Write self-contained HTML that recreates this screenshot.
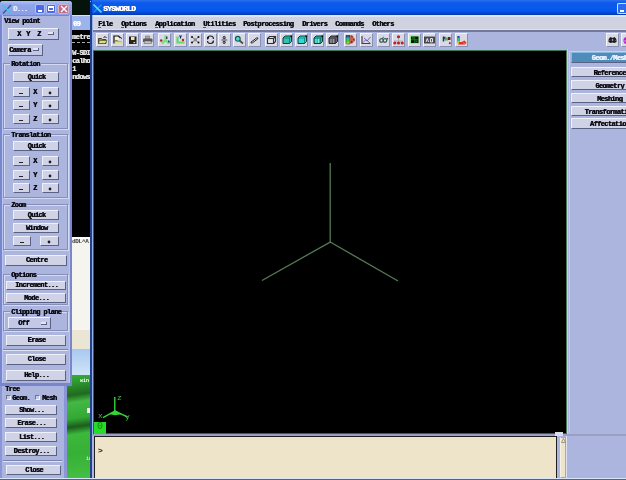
<!DOCTYPE html>
<html><head><meta charset="utf-8">
<style>
*{margin:0;padding:0;box-sizing:border-box}
html,body{width:626px;height:480px;overflow:hidden;background:#06120e;position:relative;font-family:"Liberation Mono",monospace;font-weight:bold}
.a{position:absolute}
svg{display:block}
.t{position:absolute;font-size:7px;line-height:8px;letter-spacing:-0.62px;color:#0a0a12;text-shadow:0.5px 0 0 currentColor;white-space:nowrap}
.btn{position:absolute;background:#d0d2e6;border-top:1px solid #eef0fa;border-left:1px solid #eef0fa;border-right:1px solid #5a6284;border-bottom:1px solid #5a6284;font-size:7px;line-height:8px;letter-spacing:-0.62px;color:#0a0a12;text-shadow:0.5px 0 0 currentColor;text-align:center;white-space:nowrap;overflow:hidden;text-indent:1px}
.frm{position:absolute;border:1px solid #858db8;box-shadow:inset 1px 1px 0 #d4daf2, 1px 1px 0 #d4daf2}
.lbl{position:absolute;font-size:7px;line-height:8px;letter-spacing:-0.62px;color:#0a0a12;text-shadow:0.5px 0 0 currentColor;white-space:nowrap;background:#acb5dd;padding:0 1px}
.tb{position:absolute;top:33px;width:13px;height:14px;background:#d9dae6;border-top:1px solid #f4f4fa;border-left:1px solid #f4f4fa;border-right:1px solid #8a90b0;border-bottom:1px solid #8a90b0}
.tb svg{position:absolute;left:0;top:0}
.ind{position:absolute;width:6px;height:3px;background:#e4e6f4;border-bottom:1px solid #5a6284;border-right:1px solid #5a6284}
</style></head><body><div id="w" style="position:absolute;left:0;top:0;width:626px;height:480px;will-change:transform">
<div class="a" style="left:71px;top:0px;width:20px;height:15px;background:#04140a"></div>
<div class="a" style="left:71px;top:15px;width:20px;height:15px;background:#9cb4ec;border-top:1px solid #d6e2fa"></div>
<div class="t" style="left:73px;top:20px;color:#fff">09</div>
<div class="a" style="left:71px;top:30px;width:20px;height:207px;background:#000"></div>
<div class="t" style="left:72px;top:33px;color:#e0e0e0">metre</div>
<div class="t" style="left:72px;top:49px;color:#e0e0e0">W-SDI</div>
<div class="t" style="left:72px;top:57px;color:#e0e0e0">calho</div>
<div class="t" style="left:72px;top:65px;color:#e0e0e0">1</div>
<div class="t" style="left:72px;top:73px;color:#e0e0e0">ndows</div>
<div class="a" style="left:72px;top:42px;width:18px;height:1px;border-top:1px dashed #aaa"></div>
<div class="a" style="left:71px;top:237px;width:20px;height:93px;background:#f6f4ef"></div>
<div class="a" style="left:71px;top:237px;width:20px;height:2px;background:#ffffff"></div>
<div class="t" style="left:72px;top:238px;font-size:6px;line-height:7px;letter-spacing:-0.3px;color:#404040;text-shadow:none">dDL^A</div>
<div class="a" style="left:71px;top:330px;width:20px;height:19px;background:#ebe5d3"></div>
<div class="a" style="left:71px;top:349px;width:20px;height:26px;background:linear-gradient(#a8c8f0,#d0e4f8)"></div>
<div class="a" style="left:64px;top:375px;width:27px;height:103px;background:linear-gradient(172deg,#38b038 0%,#2e9a2e 8%,#206a20 20%,#44b844 27%,#34a834 42%,#1c5c1c 50%,#3cb83c 57%,#36b036 75%,#44c044 100%)"></div>
<div class="t" style="left:80px;top:377px;color:#fff;font-size:5px;letter-spacing:0;text-shadow:none">win</div>
<div class="a" style="left:87px;top:408px;width:3px;height:5px;background:#f0f0f0"></div>
<div class="t" style="left:86px;top:455px;color:#e0e0e0;font-size:5px;letter-spacing:0;text-shadow:none">in</div>
<div class="a" style="left:0px;top:1px;width:72px;height:385px;background:#7a86cc;border-radius:3px 3px 0 0"></div>
<div class="a" style="left:2px;top:15px;width:1px;height:368px;background:#b8c6f6"></div>
<div class="a" style="left:69px;top:15px;width:1px;height:368px;background:#b8c4f0"></div>
<div class="a" style="left:0px;top:1px;width:72px;height:14px;background:linear-gradient(#b0c0f8,#90a4ea 30%,#8a9ee6);border-radius:3px 3px 0 0"></div>
<svg class="a" style="left:2px;top:4px" width="10" height="10"><path d="M9 1L1 9.5" stroke="#2a5a98" stroke-width="1.2"/><path d="M0.5 0.5L9 9.5" stroke="#40c8d8" stroke-width="1.6"/></svg>
<div class="t" style="left:13px;top:5px;color:#e4ecff">D...</div>
<div class="a" style="left:35px;top:4px;width:10px;height:10px;background:#4c6ae2;border:1px solid #b4c2f6;border-radius:2px"></div>
<div class="a" style="left:38px;top:10px;width:4px;height:2px;background:#fff"></div>
<div class="a" style="left:46px;top:4px;width:10px;height:10px;background:#4c6ae2;border:1px solid #b4c2f6;border-radius:2px"></div>
<div class="a" style="left:48px;top:6px;width:6px;height:5px;border:1px solid #fff;border-top-width:2px"></div>
<div class="a" style="left:58px;top:4px;width:11px;height:10px;background:#c06a86;border:1px solid #dcb0c4;border-radius:2px"></div>
<svg class="a" style="left:60px;top:5px" width="8" height="8"><path d="M1 1L7 7M7 1L1 7" stroke="#fff" stroke-width="1.4"/></svg>
<div class="a" style="left:3px;top:16px;width:66px;height:367px;background:#acb5dd"></div>
<div class="t" style="left:4px;top:17px;">View point</div>
<div class="btn" style="left:8px;top:28px;width:51px;height:12px;line-height:10px;text-align:left;padding-left:7px;background:#c2c8e6">X</div>
<div class="t" style="left:26px;top:30px;">Y</div>
<div class="t" style="left:37px;top:30px;">Z</div>
<div class="ind" style="left:48px;top:32px"></div>
<div class="btn" style="left:8px;top:44px;width:35px;height:12px;line-height:10px;text-align:left;padding-left:0px;text-indent:0;background:#c2c8e6">Camera</div>
<div class="ind" style="left:33px;top:48px"></div>
<div class="frm" style="left:3px;top:63px;width:65px;height:66px"></div>
<div class="lbl" style="left:10px;top:60px">Rotation</div>
<div class="btn" style="left:13px;top:72px;width:46px;height:10px;line-height:8px;">Quick</div>
<div class="btn" style="left:13px;top:87px;width:17px;height:10px;line-height:8px;"></div>
<div class="a" style="left:19px;top:93px;width:4px;height:1px;background:#202030"></div>
<div class="t" style="left:33px;top:88px;">X</div>
<div class="btn" style="left:42px;top:87px;width:17px;height:10px;line-height:8px;"></div>
<div class="a" style="left:49px;top:92px;width:2px;height:2px;background:#10101c;border-radius:1px;box-shadow:0 0 0 0.4px #303040"></div>
<div class="btn" style="left:13px;top:100px;width:17px;height:10px;line-height:8px;"></div>
<div class="a" style="left:19px;top:106px;width:4px;height:1px;background:#202030"></div>
<div class="t" style="left:33px;top:101px;">Y</div>
<div class="btn" style="left:42px;top:100px;width:17px;height:10px;line-height:8px;"></div>
<div class="a" style="left:49px;top:105px;width:2px;height:2px;background:#10101c;border-radius:1px;box-shadow:0 0 0 0.4px #303040"></div>
<div class="btn" style="left:13px;top:114px;width:17px;height:10px;line-height:8px;"></div>
<div class="a" style="left:19px;top:120px;width:4px;height:1px;background:#202030"></div>
<div class="t" style="left:33px;top:115px;">Z</div>
<div class="btn" style="left:42px;top:114px;width:17px;height:10px;line-height:8px;"></div>
<div class="a" style="left:49px;top:119px;width:2px;height:2px;background:#10101c;border-radius:1px;box-shadow:0 0 0 0.4px #303040"></div>
<div class="frm" style="left:3px;top:134px;width:65px;height:64px"></div>
<div class="lbl" style="left:10px;top:131px">Translation</div>
<div class="btn" style="left:13px;top:141px;width:46px;height:10px;line-height:8px;">Quick</div>
<div class="btn" style="left:13px;top:156px;width:17px;height:10px;line-height:8px;"></div>
<div class="a" style="left:19px;top:162px;width:4px;height:1px;background:#202030"></div>
<div class="t" style="left:33px;top:157px;">X</div>
<div class="btn" style="left:42px;top:156px;width:17px;height:10px;line-height:8px;"></div>
<div class="a" style="left:49px;top:161px;width:2px;height:2px;background:#10101c;border-radius:1px;box-shadow:0 0 0 0.4px #303040"></div>
<div class="btn" style="left:13px;top:170px;width:17px;height:10px;line-height:8px;"></div>
<div class="a" style="left:19px;top:176px;width:4px;height:1px;background:#202030"></div>
<div class="t" style="left:33px;top:171px;">Y</div>
<div class="btn" style="left:42px;top:170px;width:17px;height:10px;line-height:8px;"></div>
<div class="a" style="left:49px;top:175px;width:2px;height:2px;background:#10101c;border-radius:1px;box-shadow:0 0 0 0.4px #303040"></div>
<div class="btn" style="left:13px;top:183px;width:17px;height:10px;line-height:8px;"></div>
<div class="a" style="left:19px;top:189px;width:4px;height:1px;background:#202030"></div>
<div class="t" style="left:33px;top:184px;">Z</div>
<div class="btn" style="left:42px;top:183px;width:17px;height:10px;line-height:8px;"></div>
<div class="a" style="left:49px;top:188px;width:2px;height:2px;background:#10101c;border-radius:1px;box-shadow:0 0 0 0.4px #303040"></div>
<div class="frm" style="left:3px;top:204px;width:65px;height:46px"></div>
<div class="lbl" style="left:10px;top:201px">Zoom</div>
<div class="btn" style="left:13px;top:210px;width:46px;height:10px;line-height:8px;">Quick</div>
<div class="btn" style="left:13px;top:223px;width:46px;height:10px;line-height:8px;">Window</div>
<div class="btn" style="left:13px;top:236px;width:18px;height:10px;line-height:8px;"></div>
<div class="a" style="left:20px;top:242px;width:4px;height:1px;background:#202030"></div>
<div class="btn" style="left:40px;top:236px;width:19px;height:10px;line-height:8px;"></div>
<div class="a" style="left:48px;top:241px;width:2px;height:2px;background:#10101c;border-radius:1px;box-shadow:0 0 0 0.4px #303040"></div>
<div class="btn" style="left:5px;top:255px;width:62px;height:11px;line-height:9px;">Centre</div>
<div class="frm" style="left:3px;top:274px;width:65px;height:31px"></div>
<div class="lbl" style="left:10px;top:271px">Options</div>
<div class="btn" style="left:6px;top:281px;width:60px;height:9px;line-height:7px;">Increment...</div>
<div class="btn" style="left:6px;top:293px;width:60px;height:10px;line-height:8px;">Mode...</div>
<div class="frm" style="left:3px;top:311px;width:65px;height:20px"></div>
<div class="lbl" style="left:10px;top:308px">Clipping plane</div>
<div class="btn" style="left:8px;top:317px;width:43px;height:12px;line-height:10px;text-align:left;padding-left:8px;background:#c2c8e6">Off</div>
<div class="ind" style="left:41px;top:322px"></div>
<div class="btn" style="left:6px;top:335px;width:60px;height:11px;line-height:9px;">Erase</div>
<div class="a" style="left:3px;top:349px;width:65px;height:1px;background:#7c84ac;box-shadow:0 1px 0 #dfe3f3"></div>
<div class="btn" style="left:6px;top:354px;width:60px;height:11px;line-height:9px;">Close</div>
<div class="btn" style="left:6px;top:370px;width:60px;height:11px;line-height:9px;">Help...</div>
<div class="a" style="left:0px;top:386px;width:67px;height:92px;background:#8a96d8"></div>
<div class="a" style="left:2px;top:386px;width:62px;height:92px;background:#acb5dd"></div>
<div class="t" style="left:5px;top:385px;">Tree</div>
<div class="a" style="left:6px;top:395px;width:5px;height:5px;background:#c8cce0;border-right:1px solid #f0f0f8;border-bottom:1px solid #f0f0f8;border-top:1px solid #6e7494;border-left:1px solid #6e7494"></div>
<div class="a" style="left:35px;top:395px;width:5px;height:5px;background:#c8cce0;border-right:1px solid #f0f0f8;border-bottom:1px solid #f0f0f8;border-top:1px solid #6e7494;border-left:1px solid #6e7494"></div>
<div class="t" style="left:12px;top:394px;">Geom.</div>
<div class="t" style="left:42px;top:394px;">Mesh</div>
<div class="btn" style="left:5px;top:405px;width:52px;height:10px;line-height:8px;">Show...</div>
<div class="btn" style="left:5px;top:418px;width:52px;height:10px;line-height:8px;">Erase...</div>
<div class="btn" style="left:5px;top:432px;width:52px;height:10px;line-height:8px;">List...</div>
<div class="btn" style="left:5px;top:446px;width:52px;height:10px;line-height:8px;">Destroy...</div>
<div class="a" style="left:3px;top:460px;width:59px;height:1px;background:#7c84ac;box-shadow:0 1px 0 #dfe3f3"></div>
<div class="btn" style="left:6px;top:465px;width:55px;height:10px;line-height:8px;">Close</div>
<div class="a" style="left:90px;top:0px;width:536px;height:478px;background:#acb5dd;border-left:2px solid #22408c"></div>
<div class="a" style="left:92px;top:15px;width:1px;height:463px;background:#94b0e8"></div>
<div class="a" style="left:90px;top:0px;width:536px;height:15px;background:linear-gradient(#2a70f0,#0c5aea 20%,#0658ee 70%,#0646d0 88%,#0438b0)"></div>
<div class="a" style="left:90px;top:0px;width:2px;height:15px;background:#0a36a8"></div>
<div class="a" style="left:90px;top:1px;width:1px;height:1px;background:#9cc8f8"></div>
<svg class="a" style="left:93px;top:4px" width="9" height="9"><path d="M8.5 0.5L0.5 8.5" stroke="#2890d8" stroke-width="1.2"/><path d="M0.5 0.5L8.5 8.5" stroke="#5cd8fa" stroke-width="1.6"/></svg>
<div class="t" style="left:103px;top:5px;color:#fff;font-size:8px;letter-spacing:-0.8px">SYSWORLD</div>
<div class="a" style="left:617px;top:3px;width:9px;height:11px;background:#2a6af0;border:1px solid #d0e0fc;border-right:none;border-radius:2px 0 0 2px"></div>
<div class="a" style="left:620px;top:10px;width:4px;height:2px;background:#fff"></div>
<div class="a" style="left:93px;top:15px;width:533px;height:17px;background:#d0d3df;border-top:2px solid #dce6f8;border-bottom:2px solid #74789a"></div>
<div class="a" style="left:93px;top:29px;width:533px;height:1px;background:#dfe1ea"></div>
<div class="t" style="left:98px;top:20px;">File</div>
<div class="t" style="left:121px;top:20px;">Options</div>
<div class="t" style="left:155px;top:20px;">Application</div>
<div class="t" style="left:203px;top:20px;">Utilities</div>
<div class="t" style="left:243px;top:20px;">Postprocessing</div>
<div class="t" style="left:302px;top:20px;">Drivers</div>
<div class="t" style="left:335px;top:20px;">Commands</div>
<div class="t" style="left:372px;top:20px;">Others</div>
<div class="a" style="left:98px;top:27px;width:3px;height:1px;background:#585868"></div>
<div class="a" style="left:121px;top:27px;width:3px;height:1px;background:#585868"></div>
<div class="a" style="left:155px;top:27px;width:3px;height:1px;background:#585868"></div>
<div class="a" style="left:203px;top:27px;width:3px;height:1px;background:#585868"></div>
<div class="a" style="left:361px;top:27px;width:3px;height:1px;background:#585868"></div>
<div class="a" style="left:93px;top:32px;width:533px;height:17px;background:#acb5dd"></div>
<div class="tb" style="left:96px"><svg width="13" height="14" viewBox="0 0 13 14" style="left:-1px;top:-1px"><path d="M2.5 5.5h3l1 1h3.5v4h-7.5z" fill="#8a8a30" stroke="#2a2a10" stroke-width="0.8"/><path d="M3.5 7.5h7.5l-1.8 3H2.5z" fill="#dede80" stroke="#3a3a10" stroke-width="0.5"/><path d="M7.5 4.5q2-2 3 0.5" stroke="#202020" stroke-width="1" fill="none"/></svg></div>
<div class="tb" style="left:111px"><svg width="13" height="14" viewBox="0 0 13 14" style="left:-1px;top:-1px"><path d="M3 10.5V3h4.5l2 2" stroke="#101010" stroke-width="1.2" fill="#f0f0e8"/><path d="M4 7h2.5l1 1h3v2.5H4z" fill="#909030"/><path d="M4.5 8.5h7l-1.5 2.5H3.5z" fill="#e0e080"/><path d="M9.5 4.5l1.5 1" stroke="#202020" stroke-width="1"/></svg></div>
<div class="tb" style="left:126px"><svg width="13" height="14" viewBox="0 0 13 14" style="left:-1px;top:-1px"><rect x="3" y="3.5" width="7.5" height="7.5" fill="#262618"/><rect x="5" y="4" width="3.5" height="3" fill="#e4e4d4"/><rect x="7.5" y="9" width="1.6" height="1.2" fill="#e0e0e0"/></svg></div>
<div class="tb" style="left:141px"><svg width="13" height="14" viewBox="0 0 13 14" style="left:-1px;top:-1px"><path d="M4.5 3h4v3h-4z" fill="#a8a8a8" stroke="#606060" stroke-width="0.5"/><path d="M3 5.5h7.5q1 0 1 1V9h-9.5V6.5q0-1 1-1z" fill="#5a5a5a"/><path d="M3.5 8h6.5l0.5 2.5h-7.5z" fill="#c4c4c4" stroke="#505050" stroke-width="0.5"/></svg></div>
<div class="tb" style="left:158px"><svg width="13" height="14" viewBox="0 0 13 14" style="left:-1px;top:-1px"><path d="M7.5 7L7.5 3.5M7.5 7L4.5 10M7.5 7L10.5 10" stroke="#7ae07a" stroke-width="2.4" stroke-linecap="round"/><circle cx="3.2" cy="7.5" r="1.3" fill="#a03020"/><path d="M8.8 3.5v2.5M10.5 7.5l0.8 2" stroke="#102050" stroke-width="1.2"/></svg></div>
<div class="tb" style="left:174px"><svg width="13" height="14" viewBox="0 0 13 14" style="left:-1px;top:-1px"><path d="M3.5 3.5v6h7" stroke="#66d866" stroke-width="2.2" fill="none"/><path d="M5.5 2.5l1 1.5 1-1.5M6.5 4v1.5" stroke="#102050" stroke-width="1.1" fill="none"/><circle cx="9" cy="7" r="1.2" fill="#b02020"/></svg></div>
<div class="tb" style="left:189px"><svg width="13" height="14" viewBox="0 0 13 14" style="left:-1px;top:-1px"><path d="M3 4L9.5 9.5M9.5 4L3 9.5" stroke="#404040" stroke-width="0.6"/><rect x="4.8" y="5.3" width="3" height="3" fill="#8a8a8a"/><circle cx="3" cy="4" r="1" fill="#101010"/><circle cx="9.5" cy="4" r="1" fill="#101010"/><circle cx="3" cy="9.5" r="1" fill="#101010"/><circle cx="9.5" cy="9.5" r="1" fill="#101010"/></svg></div>
<div class="tb" style="left:204px"><svg width="13" height="14" viewBox="0 0 13 14" style="left:-1px;top:-1px"><path d="M3.5 6.5Q3.5 3 6.5 3Q9.5 3 9.5 6M9.5 7.5Q9.5 10.5 6.5 10.5Q3.5 10.5 3.5 8" stroke="#202020" stroke-width="1.1" fill="none"/><circle cx="4" cy="4.8" r="1.1" fill="#101010"/><circle cx="9" cy="9" r="0.8" fill="#303030"/></svg></div>
<div class="tb" style="left:218px"><svg width="13" height="14" viewBox="0 0 13 14" style="left:-1px;top:-1px"><path d="M6.2 4l2.5 3-2.5 3-2.5-3z" fill="#6a6a6a"/><path d="M2.3 7l3.9-1.4 4.1 1.4-4.1 1.4z" fill="#8c8c8c"/><circle cx="6.2" cy="4.4" r="1.1" fill="none" stroke="#202030" stroke-width="0.9"/><circle cx="6.2" cy="9.5" r="1.1" fill="none" stroke="#202030" stroke-width="0.9"/></svg></div>
<div class="tb" style="left:233px"><svg width="13" height="14" viewBox="0 0 13 14" style="left:-1px;top:-1px"><path d="M6.5 7.5l3.5 3" stroke="#604838" stroke-width="1.8"/><circle cx="4.8" cy="5.8" r="2.4" fill="#58d4cc" stroke="#0e5a5a" stroke-width="1.1"/></svg></div>
<div class="tb" style="left:248px"><svg width="13" height="14" viewBox="0 0 13 14" style="left:-1px;top:-1px"><path d="M3 9.2L8.5 5Q10.5 4.2 9.8 5.8L4.5 9.8Q2.5 10.5 3 9.2z" fill="#f4f4f4" stroke="#202020" stroke-width="1"/></svg></div>
<div class="tb" style="left:265px"><svg width="13" height="14" viewBox="0 0 13 14" style="left:-1px;top:-1px"><path d="M2.5 5.5h6v5h-6zM2.5 5.5l2-2h6v5l-2 2M8.5 5.5l2-2" fill="none" stroke="#303030" stroke-width="1.1"/><rect x="3.5" y="7.5" width="4" height="1.5" fill="#e8e8e8"/></svg></div>
<div class="tb" style="left:280px"><svg width="13" height="14" viewBox="0 0 13 14" style="left:-1px;top:-1px"><path d="M3 5l2-2h6.5v5.5l-2 2H3z" fill="#30c4b0" stroke="#0e3e36" stroke-width="1"/><path d="M3 5h6.5v5.5M9.5 5l2-2" stroke="#0e3e36" stroke-width="0.5" fill="none"/><circle cx="11.3" cy="3.2" r="0.9" fill="#101010"/></svg></div>
<div class="tb" style="left:295px"><svg width="13" height="14" viewBox="0 0 13 14" style="left:-1px;top:-1px"><path d="M3 5l2-2h6.5v5.5l-2 2H3z" fill="#2adcd8" stroke="#0e3e36" stroke-width="1"/><path d="M3 5h6.5v5.5M9.5 5l2-2" stroke="#0e3e36" stroke-width="0.5" fill="none"/><circle cx="11.3" cy="3.2" r="0.9" fill="#101010"/></svg></div>
<div class="tb" style="left:311px"><svg width="13" height="14" viewBox="0 0 13 14" style="left:-1px;top:-1px"><path d="M3 5l2-2h6.5v5.5l-2 2H3z" fill="#22c0b0" stroke="#0a3a32" stroke-width="1"/><path d="M3 5h6.5v5.5M9.5 5l2-2" stroke="#0a3a32" stroke-width="0.5" fill="none"/><circle cx="11.3" cy="3.2" r="0.9" fill="#101010"/><path d="M5 6v4M7.5 6v4" stroke="#90f4ec" stroke-width="0.9"/></svg></div>
<div class="tb" style="left:326px"><svg width="13" height="14" viewBox="0 0 13 14" style="left:-1px;top:-1px"><path d="M3 5l2-2h6.5v5.5l-2 2H3z" fill="#64646c" stroke="#2a2a2a" stroke-width="1"/><path d="M3 5h6.5v5.5M9.5 5l2-2" stroke="#2a2a2a" stroke-width="0.5" fill="none"/><circle cx="11.3" cy="3.2" r="0.9" fill="#101010"/><path d="M5 6v4M7.5 6v4" stroke="#a8a8a8" stroke-width="0.8"/></svg></div>
<div class="tb" style="left:344px"><svg width="13" height="14" viewBox="0 0 13 14" style="left:-1px;top:-1px"><defs><linearGradient id="rb" x1="0" y1="0" x2="0" y2="1"><stop offset="0" stop-color="#183870"/><stop offset="0.35" stop-color="#30b8a0"/><stop offset="0.65" stop-color="#40d030"/><stop offset="1" stop-color="#e8e020"/></linearGradient></defs><path d="M2 2.5h4v8.5h-3q-1 0-1-1z" fill="url(#rb)" stroke="#102030" stroke-width="0.5"/><path d="M6 3l2-1 1.5 2 1.5 2-0.5 2-2 2.5H6z" fill="#c06050"/><path d="M7 2.5l1.5 1.5M9.5 6l1 1.5M8 8l-1 2" stroke="#701818" stroke-width="1"/></svg></div>
<div class="tb" style="left:360px"><svg width="13" height="14" viewBox="0 0 13 14" style="left:-1px;top:-1px"><path d="M2 3v7.5h8.5" stroke="#404050" stroke-width="1.2" fill="none"/><path d="M3 9.5l2.5-2.5 1.5 1 3.5-4M4 5l6 5" stroke="#6a5ab0" stroke-width="0.9" fill="none"/></svg></div>
<div class="tb" style="left:377px"><svg width="13" height="14" viewBox="0 0 13 14" style="left:-1px;top:-1px"><circle cx="4.5" cy="7.5" r="1.8" fill="none" stroke="#3a6060" stroke-width="1.3"/><circle cx="8" cy="7.5" r="1.8" fill="none" stroke="#3a6060" stroke-width="1.3"/><path d="M5.5 5.5l1-1.8" stroke="#3a6060" stroke-width="1"/><circle cx="10.4" cy="5.7" r="0.8" fill="#602030"/></svg></div>
<div class="tb" style="left:392px"><svg width="13" height="14" viewBox="0 0 13 14" style="left:-1px;top:-1px"><circle cx="6.5" cy="3.8" r="1.6" fill="#c42020"/><path d="M6.5 5v2.5M2.5 9.5V8h8v1.5" stroke="#a0a0a0" stroke-width="0.8" fill="none"/><circle cx="2.8" cy="10" r="1.6" fill="#c42020"/><circle cx="6.5" cy="10" r="1.6" fill="#c42020"/><circle cx="10.2" cy="10" r="1.6" fill="#c42020"/></svg></div>
<div class="tb" style="left:408px"><svg width="13" height="14" viewBox="0 0 13 14" style="left:-1px;top:-1px"><rect x="2.5" y="3" width="8.5" height="7.5" fill="#061206" stroke="#8ef08e" stroke-width="1"/><path d="M6.75 3.5v6.5M3 6.75h7.5" stroke="#2a8a2a" stroke-width="0.8"/><rect x="4" y="4" width="2" height="2" fill="#1a5a1a"/><rect x="7.5" y="7.5" width="2" height="2" fill="#1a5a1a"/></svg></div>
<div class="tb" style="left:423px"><svg width="13" height="14" viewBox="0 0 13 14" style="left:-1px;top:-1px"><rect x="1.5" y="4" width="10" height="6" fill="#505058" stroke="#303038" stroke-width="0.8"/><path d="M3 9l1.3-3.5 1.3 3.5M7.5 5.5h2v3.5h-2z" stroke="#f0f0f0" stroke-width="0.9" fill="none"/></svg></div>
<div class="tb" style="left:439px"><svg width="13" height="14" viewBox="0 0 13 14" style="left:-1px;top:-1px"><path d="M4.5 3.5v5" stroke="#203060" stroke-width="1.5"/><path d="M4.5 4.5l2-1v4z" fill="#203060"/><path d="M6 4.5h3v3H6z" fill="#50b050"/><path d="M9 4h2.5v3H9z" fill="#602020"/><circle cx="10.8" cy="10.3" r="1" fill="#902020"/><circle cx="10.8" cy="8.5" r="0.5" fill="#c0a0a0"/></svg></div>
<div class="tb" style="left:455px"><svg width="13" height="14" viewBox="0 0 13 14" style="left:-1px;top:-1px"><path d="M3.5 3v7" stroke="#2a4aa0" stroke-width="2.4"/><path d="M3.5 5v3.5" stroke="#40c080" stroke-width="2.4"/><path d="M3.5 8v2" stroke="#e0c020" stroke-width="2.4"/><path d="M4.5 9h2l3-1.5 2 2.2-1.5 1.8H3z" fill="#e03020"/><path d="M8 9.5l2 1" stroke="#f0a040" stroke-width="0.8"/></svg></div>
<div class="tb" style="left:606px"><svg width="13" height="14" viewBox="0 0 13 14" style="left:-1px;top:-1px"><path d="M3 5.5l1.5-1.5 2 1 2-1 1.5 1.5 0.5 1.5v2l-2 1-2-0.5-2 0.5-2-1v-2z" fill="#1e1e1e"/><path d="M5.5 7l1-1 1 1-1 1z" fill="#c8c8c8"/><path d="M3 7.5h1M9 7.5h1" stroke="#808080" stroke-width="0.6"/></svg></div>
<div class="tb" style="left:621px"><svg width="13" height="14" viewBox="0 0 13 14" style="left:-1px;top:-1px"><circle cx="6" cy="7.5" r="3.6" fill="#b024c4"/><path d="M2.5 8h7" stroke="#e8b8f0" stroke-width="0.8"/></svg></div>
<div class="a" style="left:93px;top:49px;width:474px;height:385px;background:#000;border-top:2px solid #3e7458;border-left:1px solid #3a5a58;border-right:1px solid #4a7a5a;border-bottom:1px solid #3a6048"></div>
<div class="a" style="left:93px;top:49px;width:474px;height:1px;background:#9cc4b8"></div>
<svg class="a" style="left:0;top:0" width="626" height="480">
<path d="M330.2 163V242L262 280.5M330.2 242L398 281" stroke="#567a56" stroke-width="1.3" fill="none"/>
<path d="M114.8 397V411L103 417.6M114.8 411L127.8 417.2" stroke="#34d434" stroke-width="1.4" fill="none"/>
<path d="M109.5 414.2L115 410.2L121.5 414.2L115 415.2Z" fill="#34d434"/>
</svg>
<div class="t" style="left:117px;top:394px;color:#58b858;font-weight:normal;text-shadow:none;font-size:8px;letter-spacing:0">z</div>
<div class="t" style="left:98px;top:412px;color:#58b858;font-weight:normal;text-shadow:none;font-size:8px;letter-spacing:0">x</div>
<div class="t" style="left:125px;top:413px;color:#58b858;font-weight:normal;text-shadow:none;font-size:8px;letter-spacing:0">y</div>
<div class="a" style="left:94px;top:422px;width:12px;height:12px;background:#26dc26"></div>
<div class="t" style="left:97px;top:421px;color:#128a12;font-weight:normal;text-shadow:none;font-size:10px;line-height:12px;letter-spacing:0">0</div>
<div class="a" style="left:567px;top:49px;width:59px;height:429px;background:#acb5dd"></div>
<div class="a" style="left:567px;top:49px;width:1px;height:385px;background:#c4d0e8"></div>
<div class="a" style="left:569px;top:51px;width:57px;height:1px;background:#c8d0ec"></div>
<div class="a" style="left:569px;top:51px;width:1px;height:382px;background:#c4cce8"></div>
<div class="btn" style="left:571px;top:52px;width:76px;height:11px;line-height:9px;padding-top:1px;background:#4e8cbc;color:#f0f4ff;border-top-color:#8ab8dc;border-left-color:#8ab8dc">Geom./Mesh</div>
<div class="btn" style="left:571px;top:67px;width:76px;height:10px;line-height:8px;padding-top:1px">Reference</div>
<div class="btn" style="left:571px;top:80px;width:76px;height:10px;line-height:8px;padding-top:1px">Geometry</div>
<div class="btn" style="left:571px;top:93px;width:76px;height:10px;line-height:8px;padding-top:1px">Meshing</div>
<div class="btn" style="left:571px;top:106px;width:76px;height:10px;line-height:8px;padding-top:1px">Transformation</div>
<div class="btn" style="left:571px;top:118px;width:76px;height:11px;line-height:9px;padding-top:1px">Affectation</div>
<div class="a" style="left:93px;top:434px;width:533px;height:2px;background:#9aa0c4"></div>
<div class="a" style="left:555px;top:432px;width:8px;height:4px;background:#d8dcec"></div>
<div class="a" style="left:92px;top:436px;width:476px;height:42px;background:#acb5dd"></div>
<div class="a" style="left:94px;top:436px;width:463px;height:42px;background:#ede4c9;border-top:1px solid #202020;border-left:1px solid #202020;border-right:1px solid #202020"></div>
<div class="t" style="left:98px;top:447px;font-size:8px;letter-spacing:0;text-shadow:none;color:#202020">&gt;</div>
<div class="a" style="left:560px;top:437px;width:6px;height:41px;background:#ede4c9;border:1px solid #b0a890;border-left-color:#f4f0e4"></div>
<div class="a" style="left:566px;top:436px;width:1px;height:42px;background:#dce0f0"></div>
<svg class="a" style="left:561px;top:438px" width="5" height="5"><path d="M2.5 0.5L4.5 4.5H0.5Z" fill="none" stroke="#908870" stroke-width="0.8"/></svg>
<div class="a" style="left:0px;top:478px;width:626px;height:1px;background:#d8e4f8"></div>
<div class="a" style="left:0px;top:479px;width:626px;height:1px;background:#3a64c0"></div>
</div></body></html>
